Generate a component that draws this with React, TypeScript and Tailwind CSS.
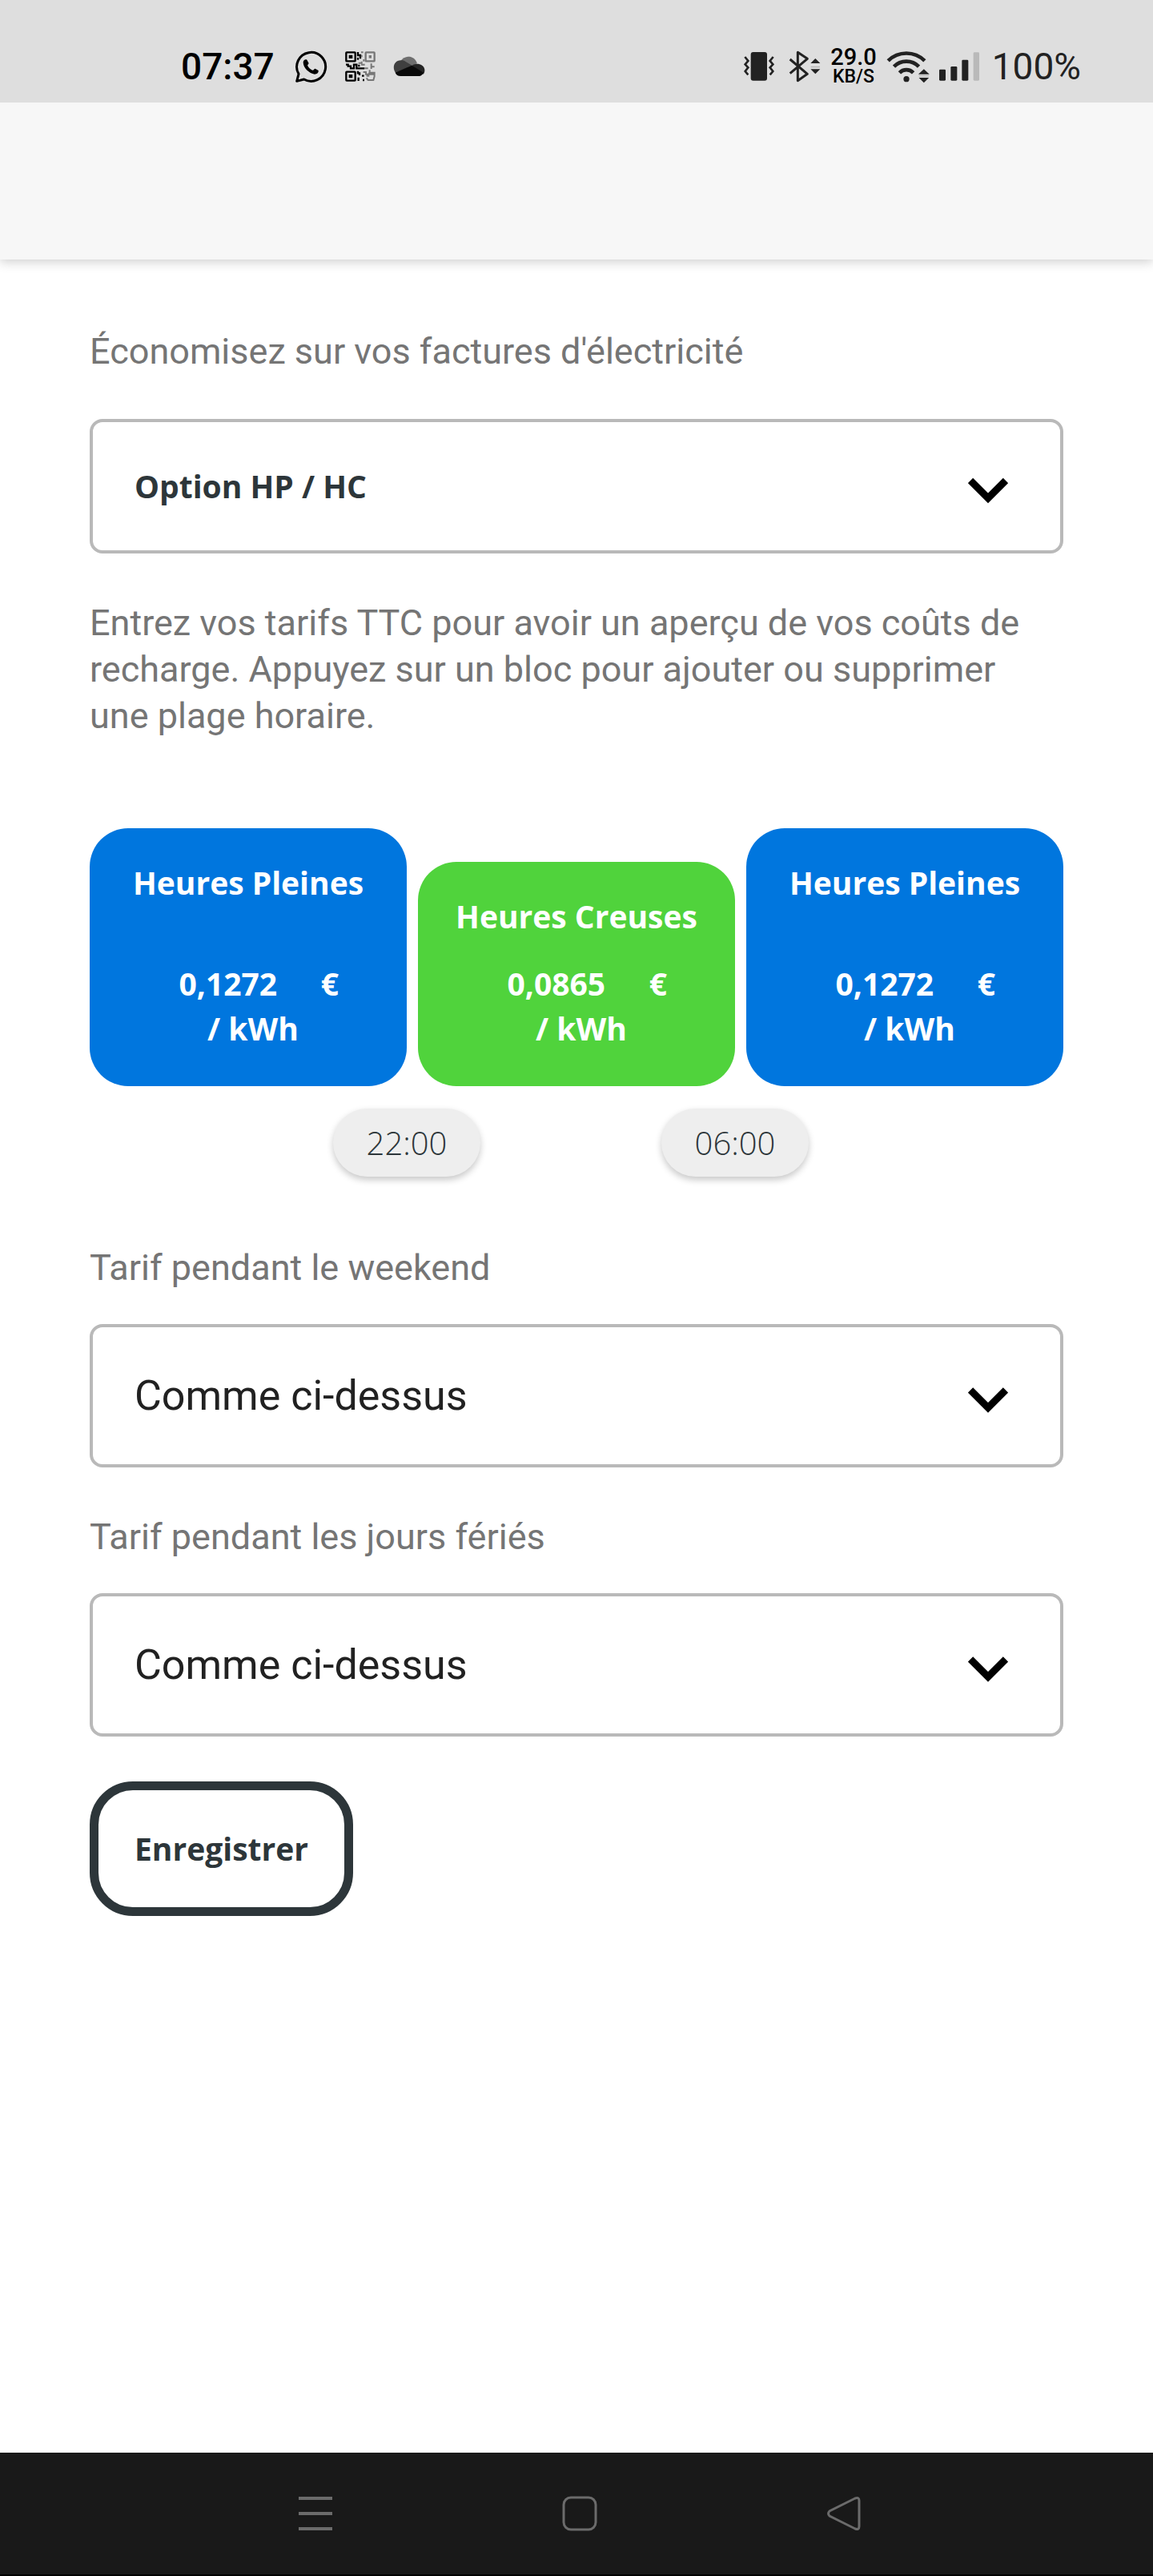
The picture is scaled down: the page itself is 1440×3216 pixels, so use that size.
import { ReactNode, useState } from 'react';

const BODY = "font-[Roboto,'Liberation_Sans',sans-serif]";
const BRAND = "font-['Open_Sans','Noto_Sans',sans-serif]";

type Slot = { id: string; name: string; price: string; peak: boolean };

const initialSlots: Slot[] = [
  { id: 'morning', name: 'Heures Pleines', price: '0,1272', peak: true },
  { id: 'night', name: 'Heures Creuses', price: '0,0865', peak: false },
  { id: 'evening', name: 'Heures Pleines', price: '0,1272', peak: true },
];

function WhatsappIcon() {
  return (
    <svg viewBox="0 0 126 126" className="size-[42px]" fill="none" aria-hidden="true">
      <path d="M38 111 L11 118 L18 91 A54 54 0 1 1 38 111 Z" stroke="#000" strokeWidth="9" strokeLinejoin="round" />
      <path d="M35 46 C37 38 44 35 49 38 L56 51 C54 56 50 57 52 61 C56 69 62 74 70 77 C74 78 76 71 80 71 L92 78 C93 87 86 92 78 92 C58 90 34 68 35 46 Z" fill="#000" />
    </svg>
  );
}

function QrIcon() {
  return (
    <svg viewBox="0 0 114 114" className="size-[38px]" fill="none" aria-hidden="true">
      <g stroke="#000" strokeWidth="7">
        <rect x="4" y="4" width="34" height="33" rx="2" />
        <rect x="4" y="77" width="34" height="33" rx="2" />
      </g>
      <rect x="77" y="4" width="33" height="33" rx="2" stroke="#777" strokeWidth="7" />
      <path d="M14 14h14v13H14z M14 87h14v13H14z" fill="#000" />
      <path d="M89 15h10v11H89z" fill="#777" />
      <path d="M48 3v12h9v13M48 24v8M3 50h8v6h10v8h12v-14h10v14h20M52 50v8M48 74v8h6v8M50 98v13M63 92h8M66 108h6M60 64h12" stroke="#000" strokeWidth="7" />
      <path d="M60 4h8M62 14v8M70 30v8M50 44h12v-6M60 50h14M98 46v12h12M98 58v8M72 64h14M92 70v10h18v8M68 78h10v8h12v-6M80 92h8v-6h22v8l-4 14h-20l-6-8" stroke="#777" strokeWidth="6" />
    </svg>
  );
}

function CloudIcon() {
  return (
    <svg viewBox="0 0 120 78" className="h-[26px] w-10" aria-hidden="true">
      <path d="M28 18 C42 -4 80 -6 90 28 L68 37 Z" fill="#6e6e6e" />
      <path d="M12 66 C-6 48 2 16 29 16 C36 15 42 17 47 21 L72 36 L12 63 Z" fill="#3f3f3f" />
      <path d="M70 36 C84 24 114 28 118 50 C119 58 116 66 112 68 L62 40 Z" fill="#252525" />
      <path d="M8 62 L70 35 L114 62 C109 72 102 75 94 75 H28 C18 75 11 70 8 62 Z" fill="#0a0a0a" />
    </svg>
  );
}

function VibrateIcon() {
  return (
    <svg viewBox="0 0 114 114" className="size-[38px]" fill="none" aria-hidden="true">
      <rect x="26" y="3" width="61" height="107" rx="9" fill="#222" />
      <path d="M4 21 L16 36 L5 49 L16 61 L5 75 L16 88" stroke="#222" strokeWidth="8" />
      <path d="M110 21 L98 36 L109 49 L98 61 L109 75 L98 88" stroke="#222" strokeWidth="8" />
    </svg>
  );
}

function BluetoothIcon() {
  return (
    <svg viewBox="0 0 120 120" className="size-10" fill="none" aria-hidden="true">
      <path d="M5 33 L70 88 L34 113 V7 L70 31 L5 86" stroke="#222" strokeWidth="9" strokeLinejoin="round" />
      <path d="M82 48 L100 30 L118 48 Z M82 70 H118 L100 88 Z" fill="#222" />
      <path d="M83 62H117" stroke="#aaa" strokeWidth="3" />
    </svg>
  );
}

function WifiIcon() {
  return (
    <svg viewBox="0 0 162 124" className="h-[41px] w-[54px]" fill="none" aria-hidden="true">
      <g stroke="#222" strokeWidth="14">
        <path d="M6 39 A98 98 0 0 1 144 39" />
        <path d="M28 61 A66 66 0 0 1 122 61" />
        <path d="M49 84 A36 36 0 0 1 101 84" />
      </g>
      <circle cx="75" cy="108" r="11" fill="#222" />
      <path d="M120 90 L141 70 L162 90 Z M122 103 H160 L141 122 Z" fill="#222" />
      <path d="M122 96H160" stroke="#aaa" strokeWidth="3" />
    </svg>
  );
}

function SignalIcon() {
  return (
    <svg viewBox="0 0 150 108" className="h-9 w-[50px]" fill="#222" aria-hidden="true">
      <rect x="0" y="65" width="24" height="42" rx="4" />
      <rect x="43" y="54" width="24" height="53" rx="4" />
      <rect x="85" y="29" width="24" height="78" rx="4" />
      <rect x="128" y="1" width="22" height="106" rx="4" fill="#b9b9b9" />
    </svg>
  );
}

function StatusBar() {
  return (
    <header className="relative z-10 flex h-32 items-center justify-between bg-[#dedede] pt-[38px] pr-[90px] pl-[226px] text-[46px] text-black">
      <div className="flex items-center">
        <span className="font-medium">07:37</span>
        <div className="ml-6 flex items-center gap-[22px]">
          <WhatsappIcon />
          <QrIcon />
          <CloudIcon />
        </div>
      </div>
      <div className="flex items-center gap-3">
        <div className="mr-1.5">
          <VibrateIcon />
        </div>
        <BluetoothIcon />
        <p className="text-center text-[29px] leading-[22px] font-medium">
          29.0
          <br />
          <small className="text-[23px]">KB/S</small>
        </p>
        <WifiIcon />
        <SignalIcon />
        <span className="ml-1 text-[#222]">100%</span>
      </div>
    </header>
  );
}

function SelectBox({ id, className, children }: { id: string; className: string; children: ReactNode }) {
  return (
    <div className="relative">
      <select
        id={id}
        className={`block w-full appearance-none rounded-[16px] border-4 border-[#b9b9b9] bg-white pr-32 pl-[52px] ${className}`}
      >
        {children}
      </select>
      <svg
        viewBox="0 0 50 32"
        className="pointer-events-none absolute inset-y-0 right-[69px] my-auto h-full w-[50px] pt-3"
        fill="none"
        aria-hidden="true"
      >
        <path d="M3 3 L25 25 L47 3" stroke="#000" strokeWidth="9" />
      </svg>
    </div>
  );
}

function PriceTile({ slot, onPrice }: { slot: Slot; onPrice: (price: string) => void }) {
  return (
    <div
      className={`flex min-w-0 flex-1 flex-col items-center rounded-[48px] pt-10 pb-11 text-[39px] leading-[56px] font-bold text-white ${BRAND} ${
        slot.peak ? 'gap-[70px] bg-[#0076de]' : 'gap-7 bg-[#50d33c]'
      }`}
    >
      <label htmlFor={slot.id} className="whitespace-nowrap">{slot.name}</label>
      <div className="flex flex-col items-center">
        <div className="flex items-center gap-8 pl-1">
          <input
            id={slot.id}
            value={slot.price}
            inputMode="decimal"
            onChange={(e) => onPrice(e.target.value)}
            className="h-14 w-[168px] bg-transparent text-center outline-none"
          />
          <span>€</span>
        </div>
        <span className="pl-3">/ kWh</span>
      </div>
    </div>
  );
}

function TimePill({ time }: { time: string }) {
  return (
    <button
      type="button"
      className={`h-[85px] w-[184px] rounded-full bg-[#eeeeee] text-[40px] font-light text-[#2d363a] shadow-[0_4px_8px_rgba(0,0,0,0.22)] ${BRAND}`}
    >
      {time}
    </button>
  );
}

function NavBar() {
  return (
    <nav className="mt-auto flex h-[154px] items-center justify-center gap-[286px] border-b-2 border-black bg-[#191919] pl-2 text-[#6b6b6b]">
      <button type="button" aria-label="Applications récentes">
        <svg viewBox="0 0 44 44" className="size-11" stroke="currentColor" strokeWidth="4" fill="none">
          <path d="M1 3H43M1 22H43M1 41H43" />
        </svg>
      </button>
      <button type="button" aria-label="Accueil">
        <svg viewBox="0 0 44 44" className="size-11" stroke="currentColor" strokeWidth="3" fill="none">
          <rect x="2" y="2" width="40" height="40" rx="9" />
        </svg>
      </button>
      <button type="button" aria-label="Retour">
        <svg viewBox="0 0 44 44" className="size-11" stroke="currentColor" strokeWidth="3" fill="none">
          <path d="M36 3 L4 19 Q1 22 4 25 L36 41 Q41 43 41 38 V6 Q41 1 36 3 Z" />
        </svg>
      </button>
    </nav>
  );
}

export default function App() {
  const [slots, setSlots] = useState(initialSlots);

  const setPrice = (id: string, price: string) =>
    setSlots(slots.map((s) => (s.id === id ? { ...s, price } : s)));

  return (
    <div className={`flex min-h-screen flex-col bg-white text-[45px] leading-[58px] text-[#757575] ${BODY}`}>
      <StatusBar />
      <div className="h-[196px] bg-[#f7f7f7] shadow-[0_2px_14px_rgba(0,0,0,0.22)]" />

      <main className="px-28 pt-[86px] pb-16">
        <label htmlFor="option" className="mb-[55px] block">Économisez sur vos factures d'électricité</label>
        <SelectBox id="option" className={`h-[168px] text-[39px] font-bold text-[#2d363a] ${BRAND}`}>
          <option>Option HP / HC</option>
        </SelectBox>

        <p className="mt-[58px] pr-6">
          Entrez vos tarifs TTC pour avoir un aperçu de vos coûts de recharge. Appuyez sur un bloc pour ajouter ou
          supprimer une plage horaire.
        </p>

        <div className="mt-[111px] flex items-end gap-[14px]">
          {slots.map((s) => (
            <PriceTile key={s.id} slot={s} onPrice={(price) => setPrice(s.id, price)} />
          ))}
        </div>
        <div className="mt-7 flex justify-center gap-[226px] pr-[14px]">
          <TimePill time="22:00" />
          <TimePill time="06:00" />
        </div>

        <label htmlFor="weekend" className="mt-[85px] mb-[41px] block">Tarif pendant le weekend</label>
        <SelectBox id="weekend" className="h-[179px] text-[52px] text-[#212121]">
          <option>Comme ci-dessus</option>
        </SelectBox>

        <label htmlFor="holidays" className="mt-[58px] mb-[41px] block">Tarif pendant les jours fériés</label>
        <SelectBox id="holidays" className="h-[179px] text-[52px] text-[#212121]">
          <option>Comme ci-dessus</option>
        </SelectBox>

        <button
          type="button"
          className={`mt-14 h-[168px] rounded-[54px] border-[11px] border-[#2d363a] px-[45px] text-[39px] font-bold text-[#2d363a] ${BRAND}`}
        >
          Enregistrer
        </button>
      </main>

      <NavBar />
    </div>
  );
}
